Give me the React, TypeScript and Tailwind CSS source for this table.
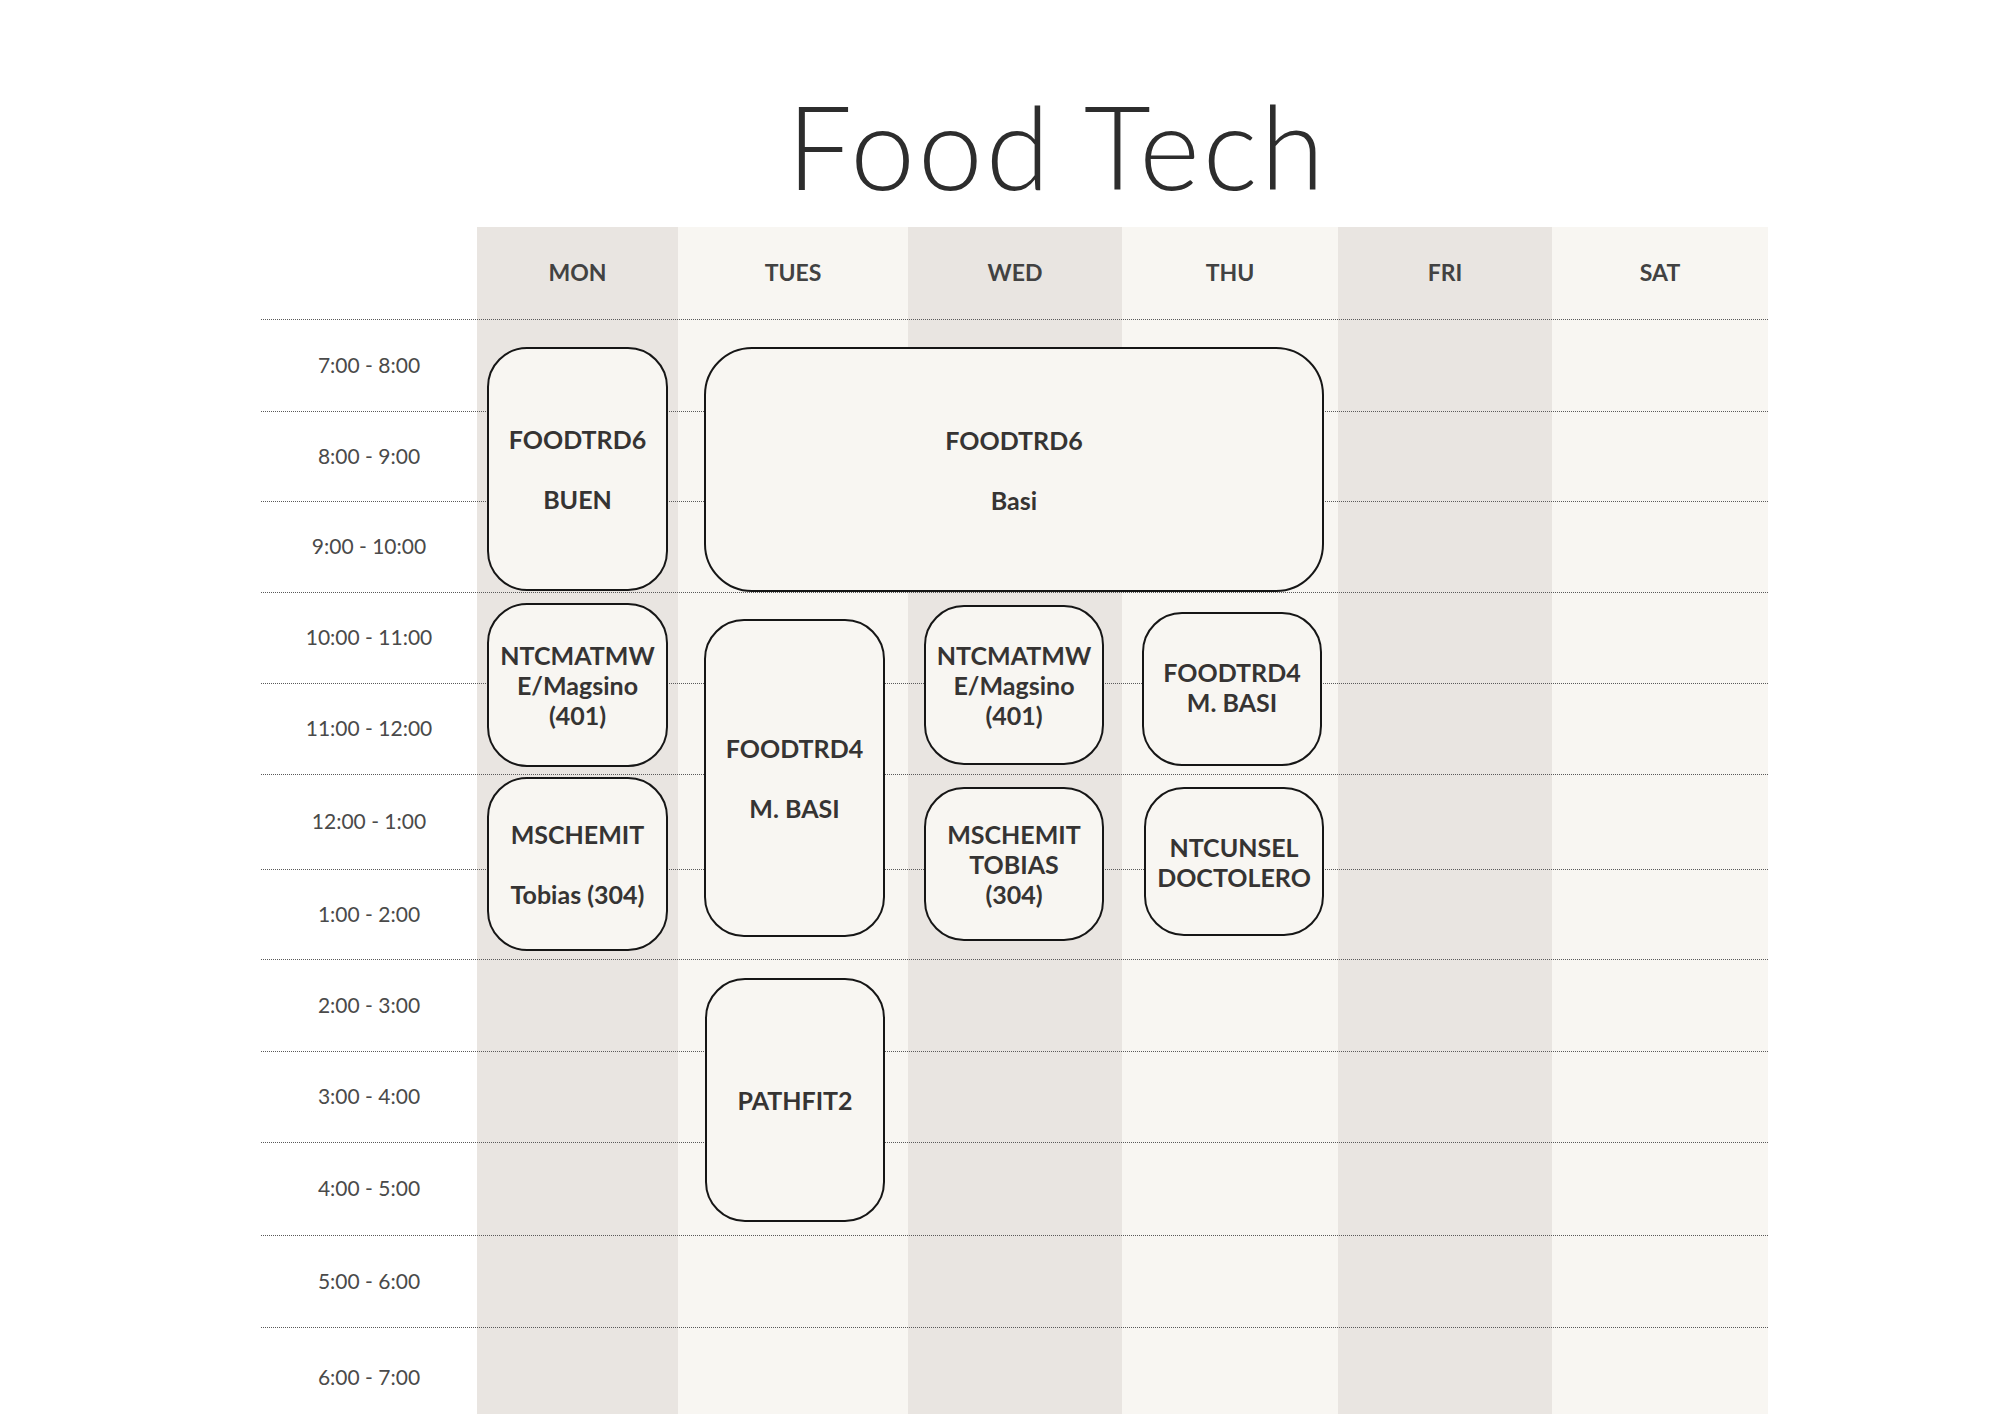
const times = [
  "7:00 - 8:00",
  "8:00 - 9:00",
  "9:00 - 10:00",
  "10:00 - 11:00",
  "11:00 - 12:00",
  "12:00 - 1:00",
  "1:00 - 2:00",
  "2:00 - 3:00",
  "3:00 - 4:00",
  "4:00 - 5:00",
  "5:00 - 6:00",
  "6:00 - 7:00",
];

// row-start per time slot, written out so tailwind picks them up
const rowStarts = [
  "row-start-2",
  "row-start-3",
  "row-start-4",
  "row-start-5",
  "row-start-6",
  "row-start-7",
  "row-start-8",
  "row-start-9",
  "row-start-10",
  "row-start-11",
  "row-start-12",
  "row-start-13",
];

const days = [
  { label: "MON", col: "col-start-2", bg: "bg-[#e9e5e1]" },
  { label: "TUES", col: "col-start-3", bg: "bg-[#f8f6f2]" },
  { label: "WED", col: "col-start-4", bg: "bg-[#e9e5e1]" },
  { label: "THU", col: "col-start-5", bg: "bg-[#f8f6f2]" },
  { label: "FRI", col: "col-start-6", bg: "bg-[#e9e5e1]" },
  { label: "SAT", col: "col-start-7", bg: "bg-[#f8f6f2]" },
];

const classes = [
  { lines: ["FOODTRD6", "", "BUEN"], place: "col-start-2 row-start-2 row-span-3 ml-[10px] mt-[28px] w-[181px] h-[244px]" },
  { lines: ["FOODTRD6", "", "Basi"], place: "col-start-3 col-span-3 row-start-2 row-span-3 ml-[26px] mt-[28px] w-[620px] h-[245px] rounded-[48px]" },
  { lines: ["NTCMATMW", "E/Magsino", "(401)"], place: "col-start-2 row-start-5 row-span-2 ml-[10px] mt-[11px] w-[181px] h-[164px]" },
  { lines: ["MSCHEMIT", "", "Tobias (304)"], place: "col-start-2 row-start-7 row-span-2 ml-[10px] mt-[3px] w-[181px] h-[174px]" },
  { lines: ["FOODTRD4", "", "M. BASI"], place: "col-start-3 row-start-5 row-span-4 ml-[26px] mt-[27px] w-[181px] h-[318px]" },
  { lines: ["PATHFIT2"], place: "col-start-3 row-start-9 row-span-3 ml-[27px] mt-[19px] w-[180px] h-[244px]" },
  { lines: ["NTCMATMW", "E/Magsino", "(401)"], place: "col-start-4 row-start-5 row-span-2 ml-[16px] mt-[13px] w-[180px] h-[160px]" },
  { lines: ["MSCHEMIT", "TOBIAS", "(304)"], place: "col-start-4 row-start-7 row-span-2 ml-[16px] mt-[13px] w-[180px] h-[154px]" },
  { lines: ["FOODTRD4", "M. BASI"], place: "col-start-5 row-start-5 row-span-2 ml-[20px] mt-[20px] w-[180px] h-[154px] pb-[4px]" },
  { lines: ["NTCUNSEL", "DOCTOLERO"], place: "col-start-5 row-start-7 row-span-2 ml-[22px] mt-[13px] w-[180px] h-[149px]" },
];

function ClassBox({ lines, place }: { lines: string[]; place: string }) {
  return (
    <div
      className={
        "self-start justify-self-start flex flex-col items-center justify-center text-center rounded-[40px] border-2 border-[#161616] bg-[#f8f6f2] text-[25px] font-bold text-[#363433] " +
        place
      }
    >
      {lines.map((l, i) =>
        l ? (
          <div key={i} className="leading-[30px] whitespace-nowrap">
            {l}
          </div>
        ) : (
          <div key={i} className="h-[30px]" />
        )
      )}
    </div>
  );
}

export default function App() {
  return (
    <div
      className="w-[2000px] h-[1414px] overflow-hidden bg-white"
      style={{ fontFamily: "Lato, 'Open Sans', sans-serif" }}
    >
      {/* title */}
      <div className="h-[227px] pt-[88px] flex justify-center">
        <h1 className="ml-[114px] text-[116px] leading-none font-light tracking-[3px] text-[#2d2d2d] whitespace-nowrap">
          Food Tech
        </h1>
      </div>

      {/* timetable */}
      <div className="ml-[261px] w-[1507px] grid grid-cols-[216px_201px_230px_214px_216px_214px_216px] grid-rows-[92px_92px_90px_91px_91px_91px_95px_90px_92px_91px_93px_92px_100px]">
        {days.map((d) => (
          <div key={d.label} className={d.col + " row-[1/-1] " + d.bg} />
        ))}
        {days.map((d) => (
          <div
            key={d.label + "-h"}
            className={d.col + " row-start-1 flex items-center justify-center pb-[2px] text-[23px] font-bold text-[#424242]"}
          >
            {d.label}
          </div>
        ))}
        {times.map((t, i) => (
          <div
            key={t}
            className={rowStarts[i] + " col-[1/-1] border-t border-dotted border-[#5a5a5a] grid grid-cols-[216px_1fr]"}
          >
            <div className="flex items-center justify-center pb-[2px] text-[21px] text-[#4a4a4a]">{t}</div>
          </div>
        ))}
        {classes.map((c, i) => (
          <ClassBox key={i} lines={c.lines} place={c.place} />
        ))}
      </div>
    </div>
  );
}
